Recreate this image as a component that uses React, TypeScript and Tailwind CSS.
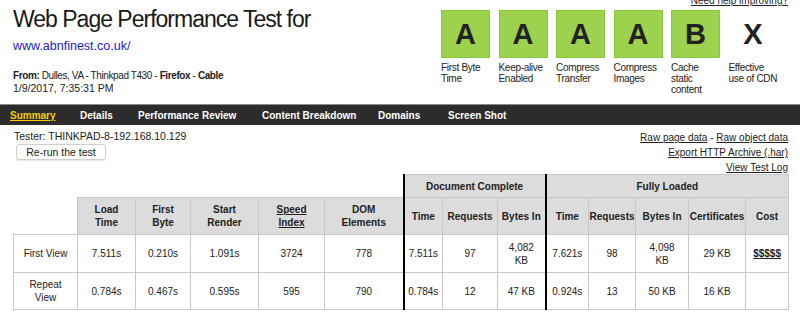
import React from "react";

const grades = [
    { g: "A", label: ["First Byte", "Time"] },
    { g: "A", label: ["Keep-alive", "Enabled"] },
    { g: "A", label: ["Compress", "Transfer"] },
    { g: "A", label: ["Compress", "Images"] },
    { g: "B", label: ["Cache", "static", "content"] },
    { g: "X", label: ["Effective", "use of CDN"] },
];

const navItems = [
    { name: "Summary", w: "w-[70px]" },
    { name: "Details", w: "w-[58px]" },
    { name: "Performance Review", w: "w-[124px]" },
    { name: "Content Breakdown", w: "w-[116px]" },
    { name: "Domains", w: "w-[70px]" },
    { name: "Screen Shot", w: "w-[90px]" },
];

const rows = [
    {
        label: ["First View"],
        cells: ["7.511s", "0.210s", "1.091s", "3724", "778", "7.511s", "97", "4,082 KB", "7.621s", "98", "4,098 KB", "29 KB", "$$$$$"],
    },
    {
        label: ["Repeat", "View"],
        cells: ["0.784s", "0.467s", "0.595s", "595", "790", "0.784s", "12", "47 KB", "0.924s", "13", "50 KB", "16 KB", ""],
    },
];

const colWidths = [64, 58, 55, 68, 66, 79, 39, 55, 48, 43, 47, 53, 57, 43];

function App() {
    const hd = "bg-[#dcdcdc] border border-[#c8c8c8] font-bold text-center align-middle";
    const td = "bg-white border border-[#c8c8c8] text-center align-middle";
    const thick = "border-l-2 border-l-black";

    return (
        <div className="w-[800px] h-[314px] overflow-hidden bg-white text-[#222] font-['Liberation_Sans',Arial,sans-serif] text-[10px] leading-[13px]">
            {/* header */}
            <div className="flex justify-between h-[104px]">
                <div className="pl-[13px] pt-[4px]">
                    <h1 className="text-[23px] leading-[30px] font-normal tracking-[-1px] text-[#1a1a1a]">
                        Web Page Performance Test for
                    </h1>
                    <a className="block mt-[4px] text-[12.5px] leading-[16px] text-[#1c1ccc]">
                        www.abnfinest.co.uk/
                    </a>
                    <div className="mt-[16px] leading-[12px] text-[10px] tracking-[-0.4px]">
                        <span className="font-bold">From:</span> Dulles, VA - Thinkpad T430 - <span className="font-bold">Firefox</span> - <span className="font-bold">Cable</span>
                    </div>
                    <div className="leading-[12px] text-[10.5px]">1/9/2017, 7:35:31 PM</div>
                </div>

                <div className="flex flex-col items-end pr-[12px]">
                    <a className="-mt-[6px] underline leading-[13px] text-[10px]">Need help improving?</a>
                    <div className="flex mt-[3px] mr-[2px]">
                        {grades.map((g, i) => (
                            <div key={i} className="w-[57.5px]">
                                <div
                                    className={
                                        g.g === "X"
                                            ? "w-[49px] h-[48px] flex items-center justify-center text-[29px] font-bold text-[#222]"
                                            : "w-[49px] h-[48px] flex items-center justify-center text-[29px] font-bold text-[#222] bg-[#9dd24f] border border-[#8cc63f]"
                                    }
                                >
                                    {g.g}
                                </div>
                                <div className="mt-[4px] leading-[11px] text-[10px] tracking-[-0.3px] whitespace-nowrap">
                                    {g.label.map((l, li) => (
                                        <div key={li}>{l}</div>
                                    ))}
                                </div>
                            </div>
                        ))}
                    </div>
                </div>
            </div>

            {/* nav */}
            <div className="h-[21px] bg-[#2c2c2c] border-t border-t-[#8a8a8a] flex items-center pl-[10px] font-bold text-white text-[10px]">
                {navItems.map((n, i) => (
                    <div key={i} className={n.w}>
                        {i === 0 ? (
                            <span className="text-[#f4cc00] underline">{n.name}</span>
                        ) : (
                            n.name
                        )}
                    </div>
                ))}
            </div>

            {/* tester + links */}
            <div className="flex justify-between pl-[14px] pr-[12px] pt-[5px] h-[49px]">
                <div>
                    <div className="leading-[13px] text-[10.5px]">Tester: THINKPAD-8-192.168.10.129</div>
                    <button className="mt-[1px] ml-[2px] w-[90px] h-[16px] bg-white border border-[#d0d0d0] rounded-[3px] text-[10.5px] leading-[14px] shadow-[0_1px_1px_rgba(0,0,0,0.1)]">
                        Re-run the test
                    </button>
                </div>
                <div className="flex flex-col items-end leading-[15px] text-[10px]">
                    <div>
                        <a className="underline">Raw page data</a> - <a className="underline">Raw object data</a>
                    </div>
                    <a className="underline">Export HTTP Archive (.har)</a>
                    <a className="underline">View Test Log</a>
                </div>
            </div>

            {/* table */}
            <div className="pl-[13px]">
                <table className="table-fixed border-collapse w-[775px] text-[10px] leading-[13px]">
                    <colgroup>
                        {colWidths.map((w, i) => (
                            <col key={i} style={{ width: w }} />
                        ))}
                    </colgroup>
                    <thead>
                        <tr className="h-[23px]">
                            <th colSpan={6} className="border-0"></th>
                            <th colSpan={3} className={hd + " " + thick}>Document Complete</th>
                            <th colSpan={5} className={hd + " " + thick}>Fully Loaded</th>
                        </tr>
                        <tr className="h-[37px]">
                            <th className="border-0"></th>
                            <th className={hd}>Load<br />Time</th>
                            <th className={hd}>First<br />Byte</th>
                            <th className={hd}>Start<br />Render</th>
                            <th className={hd}><span className="underline">Speed<br />Index</span></th>
                            <th className={hd}>DOM<br />Elements</th>
                            <th className={hd + " " + thick}>Time</th>
                            <th className={hd}>Requests</th>
                            <th className={hd}>Bytes In</th>
                            <th className={hd + " " + thick}>Time</th>
                            <th className={hd}>Requests</th>
                            <th className={hd}>Bytes In</th>
                            <th className={hd}>Certificates</th>
                            <th className={hd}>Cost</th>
                        </tr>
                    </thead>
                    <tbody>
                        {rows.map((r, ri) => (
                            <tr key={ri} className={ri === 0 ? "h-[38px]" : "h-[37px]"}>
                                <td className={td}>
                                    {r.label.map((l, li) => (
                                        <div key={li}>{l}</div>
                                    ))}
                                </td>
                                {r.cells.map((c, ci) => (
                                    <td
                                        key={ci}
                                        className={
                                            (ci === 5 || ci === 8 ? td + " " + thick : td) +
                                            (ci === 12 ? " font-bold underline" : "")
                                        }
                                    >
                                        {c.endsWith(" KB") && c.includes(",") ? (
                                            <>
                                                {c.replace(" KB", "")}
                                                <br />
                                                KB
                                            </>
                                        ) : (
                                            c
                                        )}
                                    </td>
                                ))}
                            </tr>
                        ))}
                    </tbody>
                </table>
            </div>
        </div>
    );
}

export default App;
